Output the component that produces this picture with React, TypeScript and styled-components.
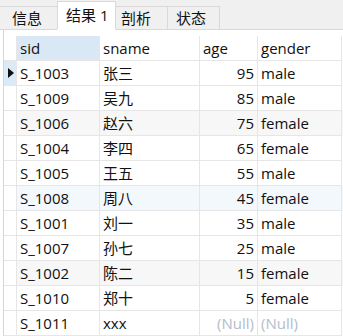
import styled, { createGlobalStyle } from 'styled-components'

const GlobalStyle = createGlobalStyle`
  html, body {
    margin: 0;
    padding: 0;
    background: #ffffff;
  }
  body {
    width: 343px;
    height: 336px;
    overflow: hidden;
    font-family: "Open Sans", "Noto Sans CJK SC", sans-serif;
    font-size: 15px;
    color: #111;
  }
`

const TabBar = styled.div`
  display: flex;
  align-items: flex-end;
  height: 30px;
  background: #f0f0f0;
  border-bottom: 1px solid #d9d9d9;
  box-sizing: border-box;
`

const Tab = styled.div<{ $active?: boolean; $w: number; $pad: number }>`
  box-sizing: border-box;
  width: ${(p) => p.$w}px;
  height: ${(p) => (p.$active ? 29 : 23)}px;
  margin-bottom: ${(p) => (p.$active ? -1 : 0)}px;
  padding-left: ${(p) => p.$pad}px;
  padding-top: ${(p) => (p.$active ? 3 : 1)}px;
  background: ${(p) => (p.$active ? '#ffffff' : '#f0f0f0')};
  border: 1px solid #d9d9d9;
  border-bottom: ${(p) => (p.$active ? '1px solid #ffffff' : 'none')};
  margin-left: -1px;
  font-size: 15px;
  line-height: 20px;
  white-space: nowrap;
  color: #111;
`

const Grid = styled.div`
  margin-left: 3px;
  padding-top: 6px;
  border-left: 1px solid #d6d6d6;
  height: 306px;
  box-sizing: border-box;
`

const Row = styled.div<{ $bg?: string }>`
  display: grid;
  grid-template-columns: 13px 83px 100px 58px 84px;
  height: 25px;
  background: ${(p) => p.$bg || '#ffffff'};
`

const Cell = styled.div<{ $right?: boolean; $null?: boolean; $bg?: string }>`
  box-sizing: border-box;
  border-right: 1px solid #e6e6e6;
  border-bottom: 1px solid #e6e6e6;
  padding: 0 ${(p) => (p.$right ? 3 : 0)}px 0 ${(p) => (p.$right ? 0 : 3)}px;
  text-align: ${(p) => (p.$right ? 'right' : 'left')};
  line-height: 24px;
  white-space: nowrap;
  overflow: hidden;
  color: ${(p) => (p.$null ? '#b4bccb' : '#111')};
  background: ${(p) => p.$bg || 'transparent'};
`

const Indicator = styled.div<{ $current?: boolean }>`
  box-sizing: border-box;
  border-right: 1px solid #e6e6e6;
  border-bottom: 1px solid #e6e6e6;
  background: ${(p) => (p.$current ? '#dce9f7' : '#ffffff')};
  display: flex;
  align-items: center;
  justify-content: center;
`

const Arrow = styled.span`
  width: 0;
  height: 0;
  border-top: 5px solid transparent;
  border-bottom: 5px solid transparent;
  border-left: 6px solid #111;
  margin-left: 1px;
`

type Student = { sid: string; sname: string; age: number | null; gender: string | null; bg?: string }

const rows: Student[] = [
  { sid: 'S_1003', sname: '张三', age: 95, gender: 'male' },
  { sid: 'S_1009', sname: '吴九', age: 85, gender: 'male' },
  { sid: 'S_1006', sname: '赵六', age: 75, gender: 'female', bg: '#f7f7f7' },
  { sid: 'S_1004', sname: '李四', age: 65, gender: 'female' },
  { sid: 'S_1005', sname: '王五', age: 55, gender: 'male' },
  { sid: 'S_1008', sname: '周八', age: 45, gender: 'female', bg: '#f3f8fd' },
  { sid: 'S_1001', sname: '刘一', age: 35, gender: 'male' },
  { sid: 'S_1007', sname: '孙七', age: 25, gender: 'male' },
  { sid: 'S_1002', sname: '陈二', age: 15, gender: 'female', bg: '#f7f7f7' },
  { sid: 'S_1010', sname: '郑十', age: 5, gender: 'female' },
  { sid: 'S_1011', sname: 'xxx', age: null, gender: null },
]

const App = () => {
  return (
    <>
      <GlobalStyle />
      <TabBar>
        <Tab $w={59} $pad={12}>信息</Tab>
        <Tab $active $w={59} $pad={8}>结果 1</Tab>
        <Tab $w={53} $pad={5}>剖析</Tab>
        <Tab $w={53} $pad={8}>状态</Tab>
      </TabBar>
      <Grid>
        <Row>
          <Indicator />
          <Cell $bg="#dae8f6">sid</Cell>
          <Cell>sname</Cell>
          <Cell>age</Cell>
          <Cell>gender</Cell>
        </Row>
        {rows.map((r, i) => (
          <Row key={r.sid} $bg={r.bg}>
            <Indicator $current={i === 0}>{i === 0 && <Arrow />}</Indicator>
            <Cell>{r.sid}</Cell>
            <Cell>{r.sname}</Cell>
            <Cell $right $null={r.age === null}>
              {r.age === null ? '(Null)' : r.age}
            </Cell>
            <Cell $null={r.gender === null}>{r.gender ?? '(Null)'}</Cell>
          </Row>
        ))}
      </Grid>
    </>
  )
}

export default App
